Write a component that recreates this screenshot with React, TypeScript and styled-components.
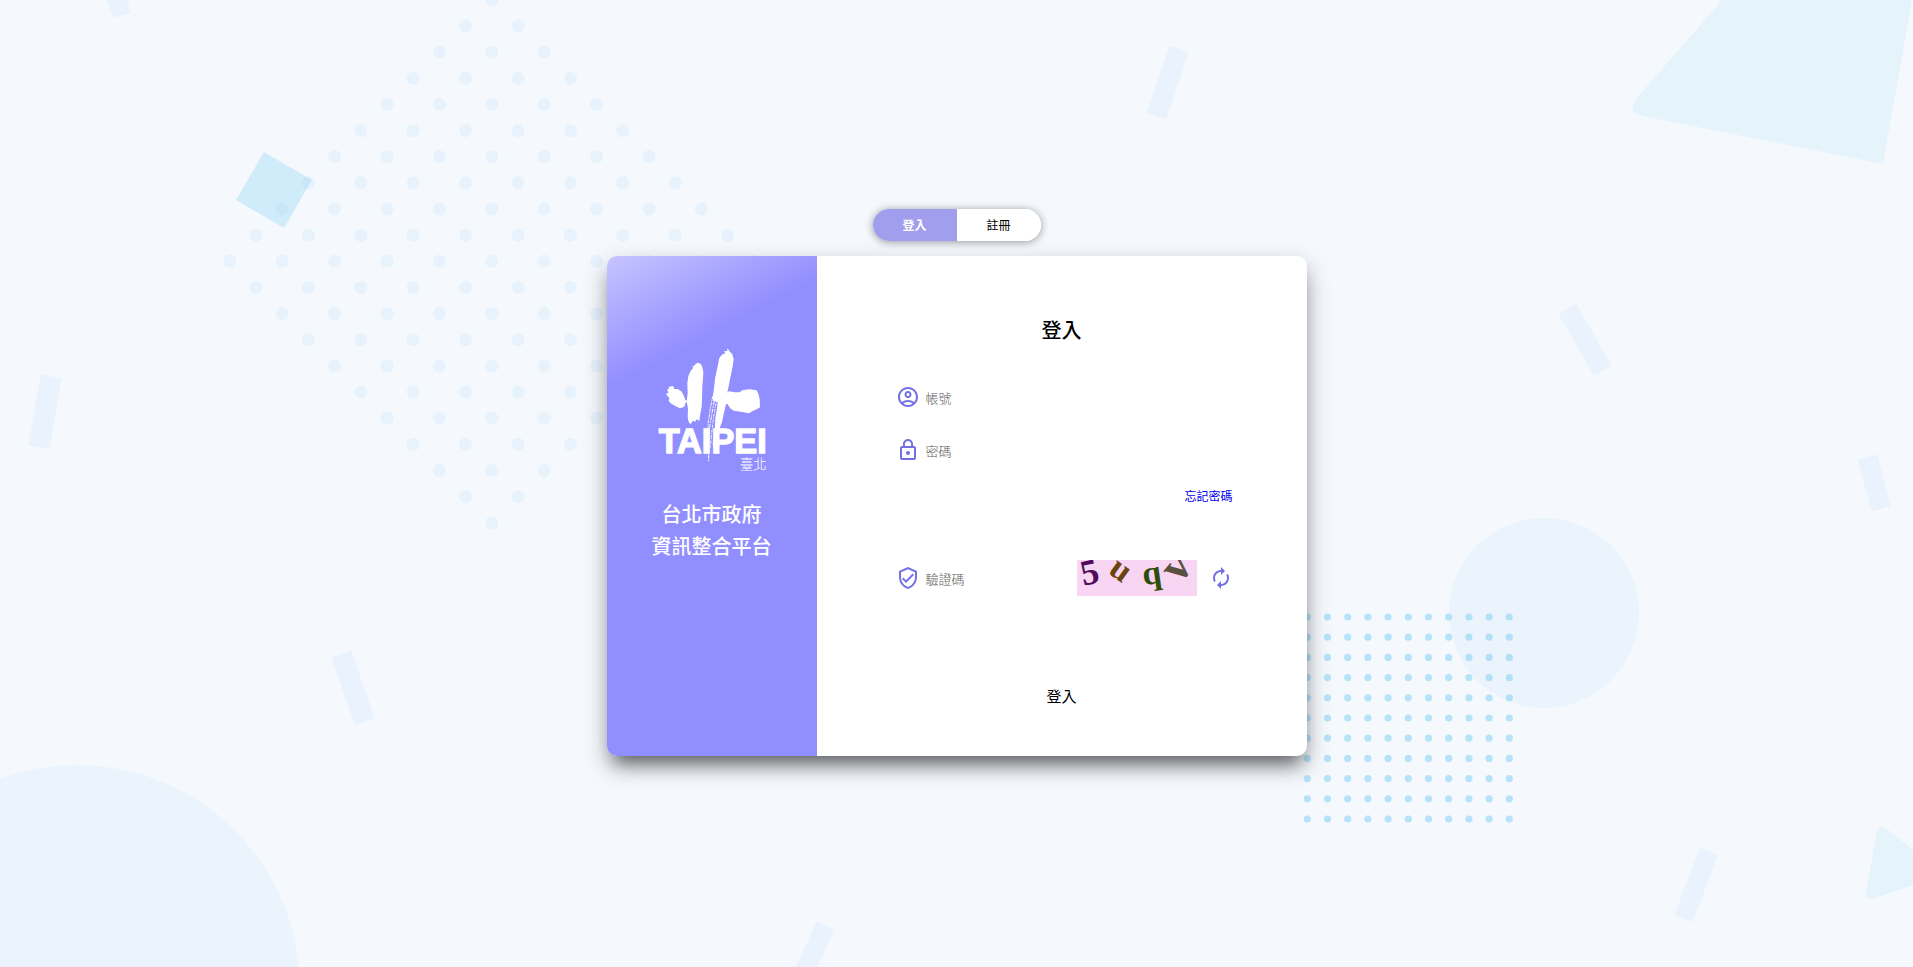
import React, { useState } from "react";
import styled, { createGlobalStyle } from "styled-components";
import {
  MdOutlineAccountCircle,
  MdLockOutline,
  MdOutlineVerifiedUser,
  MdAutorenew,
} from "react-icons/md";

const GlobalStyle = createGlobalStyle`
  * { box-sizing: border-box; }
  body {
    margin: 0;
    background: #f5f9fe;
    color: #000;
    font-family: "Noto Sans CJK TC", "Noto Sans", sans-serif;
  }
  button, input { font-family: inherit; }
`;

const Page = styled.div`
  position: relative;
  min-height: 100vh;
  display: flex;
  flex-direction: column;
  align-items: center;
  justify-content: center;
  gap: 15px;
  padding-bottom: 2px;
  overflow: hidden;
`;

const Backdrop = styled.svg`
  position: absolute;
  inset: 0;
  width: 100%;
  height: 100%;
`;

const Tabs = styled.div`
  position: relative;
  display: flex;
  width: 168px;
  height: 32px;
  border-radius: 16px;
  overflow: hidden;
  background: #fff;
  box-shadow: 0 1px 8px rgba(0, 0, 0, 0.4);
`;

const Tab = styled.button<{ $active: boolean }>`
  flex: 1;
  padding: 0;
  border: 0;
  cursor: pointer;
  font-size: 12px;
  line-height: 32px;
  font-weight: ${(p) => (p.$active ? 700 : 400)};
  color: ${(p) => (p.$active ? "#fff" : "#000")};
  background: ${(p) => (p.$active ? "#a19eed" : "#fff")};
`;

const Card = styled.main`
  position: relative;
  display: flex;
  width: 700px;
  max-width: 100%;
  min-height: 500px;
  border-radius: 10px;
  background: #fff;
  box-shadow:
    0 14px 18px -8px rgba(0, 0, 0, 0.5),
    0 10px 24px rgba(0, 0, 0, 0.28);
`;

const Brand = styled.section`
  flex: 0 0 30%;
  display: flex;
  flex-direction: column;
  align-items: center;
  gap: 24px;
  padding-top: 90px;
  border-radius: 10px 0 0 10px;
  background: linear-gradient(152deg, #c6c4ff 0%, #918eff 22%);
`;

const BrandName = styled.h1`
  margin: 0;
  color: #fff;
  font-size: 20px;
  line-height: 32px;
  font-weight: 500;
  text-align: center;
`;

const Form = styled.form`
  flex: 1;
  min-width: 0;
  display: flex;
  flex-direction: column;
  padding-top: 54px;
`;

const Heading = styled.h2`
  margin: 0 0 33px;
  font-size: 20px;
  line-height: 40px;
  font-weight: 500;
  text-align: center;
`;

const Fields = styled.div`
  display: flex;
  flex-direction: column;
  padding: 0 74px 0 79px;
`;

const Credentials = styled.div`
  display: flex;
  flex-direction: column;
  gap: 25px;
`;

const Field = styled.label`
  display: flex;
  align-items: center;
  flex: 1;
  min-width: 0;
  height: 28px;
  gap: 6px;
  color: #7370e6;
  svg { flex: none; }
`;

const Input = styled.input`
  flex: 1;
  width: 100%;
  min-width: 0;
  height: 28px;
  padding: 0;
  border: 0;
  outline: 0;
  background: transparent;
  font-size: 13px;
  font-weight: 300;
  color: #000;
  &::placeholder { color: #5c5c5c; opacity: 1; }
`;

const Forgot = styled.a`
  align-self: flex-end;
  margin-top: 22px;
  font-size: 12px;
  line-height: 20px;
  color: #0000ee;
  text-decoration: none;
`;

const CaptchaRow = styled.div`
  display: flex;
  align-items: center;
  gap: 12px;
  margin-top: 54px;
`;

const CaptchaImage = styled.svg`
  flex: none;
`;

const Refresh = styled.button`
  display: flex;
  padding: 0;
  border: 0;
  background: none;
  color: #7370e6;
  cursor: pointer;
`;

const Submit = styled.button`
  align-self: center;
  height: 40px;
  margin-top: 80px;
  padding: 0 20px;
  border: 0;
  background: transparent;
  font-size: 15px;
  line-height: 40px;
  cursor: pointer;
`;

const STEPS = Array.from({ length: 11 }, (_, i) => i);

const BARS = [
  "107,0 127,0 130,13 113,17",
  "1170,46 1188,53 1166,119 1147,113",
  "1576,304 1611,366 1594,375 1559,314",
  "1877,455 1890,506 1872,511 1858,460",
  "41,375 61,379 49,448 29,445",
  "351,651 374,718 355,724 332,658",
  "1700,848 1717,855 1693,921 1675,915",
  "817,922 834,930 817,967 796,967",
];

function Shapes() {
  return (
    <Backdrop viewBox="0 0 1913 967" preserveAspectRatio="xMidYMid slice" aria-hidden="true">
      <g fill="#eaf3fd" stroke="#eaf3fd" strokeLinejoin="round">
        {BARS.map((points) => (
          <polygon key={points} points={points} />
        ))}
      </g>
      <g fill="#ebf4fc">
        <circle cx="77" cy="988" r="223" />
        <circle cx="1544" cy="613" r="95" />
      </g>
      <g fill="#e5f3fb">
        <path d="M1722 0 L1635 100 Q1631 106 1634 111 Q1636 115 1642 116 L1883 164 L1912 0 Z" />
        <path d="M1877 831 Q1879 827 1882 827 Q1884 827 1887 829 L1913 850 V885 L1872 899 Q1865 899 1866 893 Z" />
      </g>
      <polygon points="264,152 312,180 284,228 236,200" fill="#d0ecfa" />
      <g fill="#8ccbf0" fillOpacity="0.13">
        {STEPS.map((i) =>
          STEPS.map((j) => (
            <circle key={`${i}-${j}`} cx={491.8 + (i - j) * 26.2} cy={(i + j) * 26.15 - 0.2} r="6.5" />
          ))
        )}
      </g>
      <g fill="#8fd5f3" fillOpacity="0.62">
        {STEPS.map((i) =>
          STEPS.map((j) => (
            <circle key={`${i}-${j}`} cx={1307.3 + i * 20.2} cy={617 + j * 20.2} r="3.6" />
          ))
        )}
      </g>
    </Backdrop>
  );
}

function Logo() {
  return (
    <svg width="112" height="128" viewBox="48 48 336 384" fill="#fff" role="img" aria-label="TAIPEI 臺北">
      <path d="M78 192 L86 187 L81 180 L88 175 L85 171 L98 168 L103 173 L101 177 L113 177 L124 184 L131 196 L136 210 L143 214 L136 220 L133 230 L120 235 L106 228 L92 220 L86 212 L88 205 Z" />
      <path d="M160 113 L157 107 L163 108 L167 101 L175 98 L183 103 L187 112 L190 126 L189 146 L187 170 L186 210 L185 230 L180 258 L178 272 L170 268 L165 275 L158 272 L152 283 L146 276 L143 262 L144 236 L140 214 L143 190 L142 160 L145 138 L152 122 Z" />
      <path d="M246 74 L256 70 L252 64 L262 63 L262 54 L270 66 L277 72 L281 88 L279 104 L272 138 L266 168 L262 188 L266 184 L284 187 L300 187 L304 182 L310 180 L330 178 L350 181 L355 191 L359 208 L360 232 L350 238 L336 244 L328 250 L306 246 L282 242 L272 236 L262 222 L258 222 L252 248 L246 276 L240 292 L236 318 L230 346 L222 354 L218 342 L224 306 L226 264 L231 236 L233 216 L220 213 L218 200 L221 184 L225 146 L234 104 L238 84 Z" />
      <g fill="none" stroke="#fff" strokeWidth="3">
        <path strokeDasharray="9 2 4 3" d="M218 200 L211 236 L205 276 L202 330 L203 368" />
        <path strokeDasharray="5 3 12 3" d="M224 206 L216 250 L209 292 L206 340 L206 395" />
        <path strokeDasharray="3 4 7 2" d="M229 214 L221 262 L215 310 L211 352" />
      </g>
      <text x="56" y="369" fontFamily="Liberation Sans, Arial, sans-serif" fontWeight="700" fontSize="103" stroke="#fff" strokeWidth="4">
        TAIPEI
      </text>
      <text x="300" y="416" fontFamily="Noto Sans CJK TC, sans-serif" fontWeight="300" fontSize="40">
        臺北
      </text>
    </svg>
  );
}

function Captcha() {
  return (
    <CaptchaImage width="120" height="36" viewBox="0 0 120 36" role="img" aria-label="驗證碼圖片">
      <rect width="120" height="36" fill="#f8d5f2" />
      <g fontFamily="Liberation Serif, serif" fontWeight="700" fontSize="34" textAnchor="middle">
        <text transform="translate(15 24) rotate(-12)" fill="#4d0d5c" fontSize="36">5</text>
        <text transform="translate(38 18) rotate(36)" fill="#6b450f">u</text>
        <text transform="translate(76 24) rotate(-8)" fill="#2f4d0d">q</text>
        <text transform="translate(110 16) rotate(-50)" fill="#59503f" fontSize="46">v</text>
      </g>
    </CaptchaImage>
  );
}

export default function App() {
  const [tab, setTab] = useState("login");
  return (
    <>
      <GlobalStyle />
      <Page>
        <Shapes />
        <Tabs>
          <Tab type="button" $active={tab === "login"} onClick={() => setTab("login")}>登入</Tab>
          <Tab type="button" $active={tab === "register"} onClick={() => setTab("register")}>註冊</Tab>
        </Tabs>
        <Card>
          <Brand>
            <Logo />
            <BrandName>台北市政府<br />資訊整合平台</BrandName>
          </Brand>
          <Form onSubmit={(e) => e.preventDefault()}>
            <Heading>登入</Heading>
            <Fields>
              <Credentials>
                <Field>
                  <MdOutlineAccountCircle size={24} />
                  <Input type="text" placeholder="帳號" aria-label="帳號" />
                </Field>
                <Field>
                  <MdLockOutline size={24} />
                  <Input type="password" placeholder="密碼" aria-label="密碼" />
                </Field>
              </Credentials>
              <Forgot href="#forgot">忘記密碼</Forgot>
              <CaptchaRow>
                <Field>
                  <MdOutlineVerifiedUser size={24} />
                  <Input type="text" placeholder="驗證碼" aria-label="驗證碼" />
                </Field>
                <Captcha />
                <Refresh type="button" aria-label="重新整理驗證碼">
                  <MdAutorenew size={24} />
                </Refresh>
              </CaptchaRow>
            </Fields>
            <Submit type="submit">登入</Submit>
          </Form>
        </Card>
      </Page>
    </>
  );
}
